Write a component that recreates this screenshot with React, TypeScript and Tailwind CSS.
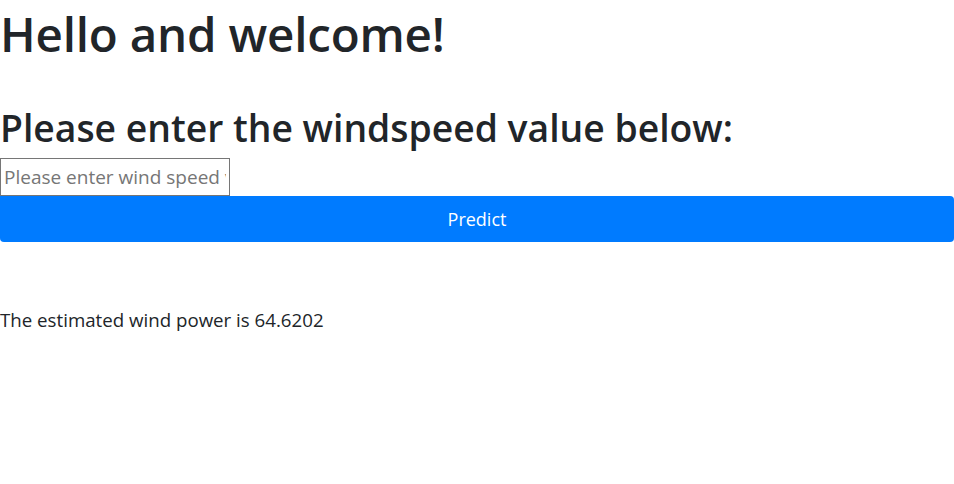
export default function App() {
  return (
    <div className="min-h-[484px] bg-white text-[#212529] font-['Open_Sans','Noto_Sans',sans-serif]">
      <h1 className="mt-[4px] mb-0 text-[47.5px] leading-[60px] font-semibold tracking-[-0.2px]">Hello and welcome!</h1>
      <h2 className="mt-[40px] mb-[6px] text-[37.3px] leading-[48px] font-semibold">
        Please enter the windspeed value below:
      </h2>
      <form className="flex flex-col" onSubmit={(e) => e.preventDefault()}>
        <input
          type="text"
          placeholder="Please enter wind speed value"
          className="w-[230px] h-[38px] border border-[#767676] px-[3px] text-[19px] placeholder:text-[#767676] outline-none"
        />
        <button
          type="submit"
          className="w-full h-[46px] bg-[#007bff] text-white text-[18px] rounded-[4px] rounded-tl-none"
        >
          Predict
        </button>
      </form>
      <p className="mt-[63px] text-[18.7px] leading-[30px]">The estimated wind power is 64.6202</p>
    </div>
  );
}
